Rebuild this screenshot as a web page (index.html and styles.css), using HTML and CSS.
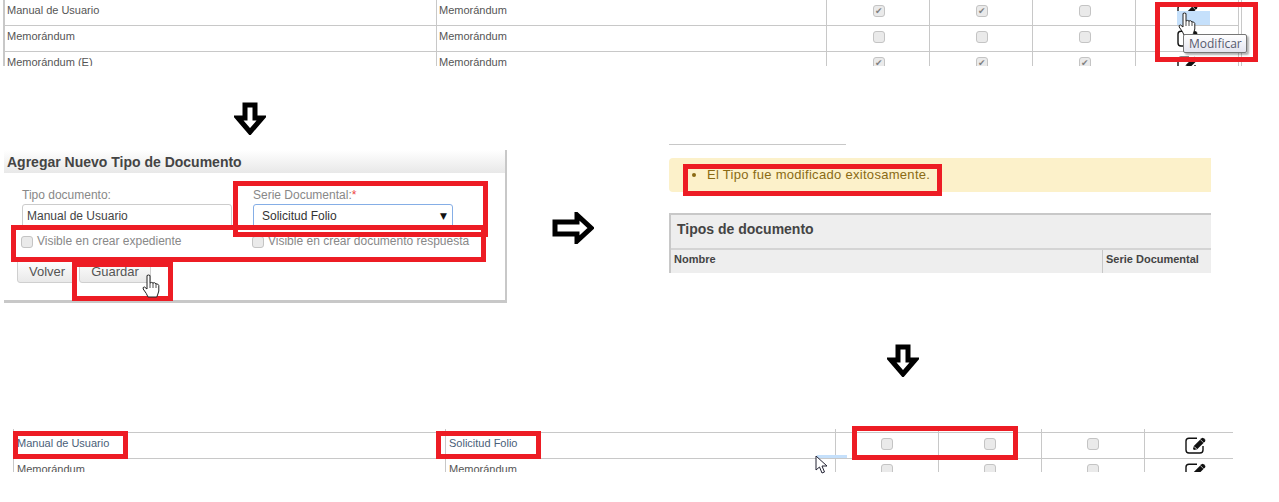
FILE: index.html

```html
<!DOCTYPE html>
<html lang="es">
<head>
  <meta charset="UTF-8">
  <meta name="viewport" content="width=device-width, initial-scale=1.0">
  <title>Tipos de documento</title>
  <link rel="stylesheet" href="styles.css">
</head>
<body>
<svg class="defs" width="0" height="0">
  <symbol id="edit" viewBox="0 0 22 17">
    <path d="M12 1.200H4Q1 1.200 1 4V13Q1 16 4 16H15Q18 16 18 13V9" fill="none" stroke="#111" stroke-width="1.400"/>
    <path d="M8 12L8.800 9L16.600 1.200Q17.600 .4 18.600 1.200L20 2.600Q20.800 3.600 20 4.600L12.200 12.200L9 13Z" fill="#111"/>
    <path d="M9.200 9.600L11.600 12" stroke="#fff" stroke-width=".9"/>
    <path d="M15.400 2.600L18.600 5.800" stroke="#fff" stroke-width=".7"/>
  </symbol>
  <symbol id="hand" viewBox="0 0 18 24">
    <path d="M5 1.500Q6.500 .5 8 1.500V9Q9.500 7.800 11 9Q12.500 8 14 9.800Q16 9.500 16.800 11.500V17Q16 20 14.800 23H6Q5 20 1.200 15Q.5 13 2.500 13L5 15Z" fill="#fff" stroke="#222" stroke-width="1" stroke-linejoin="round"/>
    <path d="M8 9V14M11 9V14M14 10V14" stroke="#222" stroke-width=".8" fill="none"/>
  </symbol>
</svg>

<!-- listado antes del cambio -->
<div class="shot shot-before">
  <div class="grid">
    <div class="row">
      <div class="cell">Manual de Usuario</div>
      <div class="cell">Memorándum</div>
      <div class="cell box"><input type="checkbox" checked disabled></div>
      <div class="cell box"><input type="checkbox" checked disabled></div>
      <div class="cell box"><input type="checkbox" disabled></div>
      <div class="cell box"><svg class="edit"><use href="#edit"/></svg></div>
    </div>
    <div class="row">
      <div class="cell">Memorándum</div>
      <div class="cell">Memorándum</div>
      <div class="cell box"><input type="checkbox" disabled></div>
      <div class="cell box"><input type="checkbox" disabled></div>
      <div class="cell box"><input type="checkbox" disabled></div>
      <div class="cell box"><svg class="edit"><use href="#edit"/></svg></div>
    </div>
    <div class="row">
      <div class="cell">Memorándum (E)</div>
      <div class="cell">Memorándum</div>
      <div class="cell box"><input type="checkbox" checked disabled></div>
      <div class="cell box"><input type="checkbox" checked disabled></div>
      <div class="cell box"><input type="checkbox" checked disabled></div>
      <div class="cell box"><svg class="edit"><use href="#edit"/></svg></div>
    </div>
  </div>
</div>
<div class="selection sel-top"></div>
<svg class="cursor hand-top"><use href="#hand"/></svg>
<div class="tooltip">Modificar</div>
<div class="mark mark-edit"></div>

<svg class="arrow arrow-down-1" viewBox="0 0 32 33"><path d="M11 3H21V16H28L16 30L4 16H11Z"/></svg>

<!-- formulario -->
<div class="shot form-panel">
  <div class="form-title">Agregar Nuevo Tipo de Documento</div>
  <div class="form-body">
    <div class="field">
      <label>Tipo documento:</label>
      <input class="text-input" type="text" value="Manual de Usuario">
    </div>
    <div class="field">
      <label>Serie Documental:<span class="req">*</span></label>
      <div class="select-box">Solicitud Folio <span class="caret">▼</span></div>
    </div>
    <label class="option"><input type="checkbox" disabled> Visible en crear expediente</label>
    <label class="option"><input type="checkbox" disabled> Visible en crear documento respuesta</label>
    <div class="actions">
      <button class="btn">Volver</button>
      <button class="btn">Guardar</button>
    </div>
  </div>
</div>
<div class="mark mark-serie"></div>
<div class="mark mark-visible"></div>
<div class="mark mark-save"></div>
<svg class="cursor hand-save"><use href="#hand"/></svg>

<svg class="arrow arrow-right" viewBox="0 0 42 32"><path d="M3 10H25V3L39 16L25 29V22H3Z"/></svg>

<!-- resultado -->
<div class="shot result">
  <div class="stub-line"></div>
  <div class="alert"><ul><li>El Tipo fue modificado exitosamente.</li></ul></div>
  <div class="list-head">
    <h3>Tipos de documento</h3>
    <div class="list-cols">
      <div>Nombre</div>
      <div>Serie Documental</div>
    </div>
  </div>
</div>
<div class="mark mark-alert"></div>

<svg class="arrow arrow-down-2" viewBox="0 0 32 33"><path d="M11 3H21V16H28L16 30L4 16H11Z"/></svg>

<!-- listado despues del cambio -->
<div class="shot shot-after">
  <div class="grid">
    <div class="row stub">
      <div class="cell"></div><div class="cell"></div><div class="cell"></div>
      <div class="cell"></div><div class="cell"></div><div class="cell"></div>
    </div>
    <div class="row">
      <div class="cell link">Manual de Usuario</div>
      <div class="cell link">Solicitud Folio</div>
      <div class="cell box"><input type="checkbox" disabled></div>
      <div class="cell box"><input type="checkbox" disabled></div>
      <div class="cell box"><input type="checkbox" disabled></div>
      <div class="cell box"><svg class="edit"><use href="#edit"/></svg></div>
    </div>
    <div class="row">
      <div class="cell">Memorándum</div>
      <div class="cell">Memorándum</div>
      <div class="cell box"><input type="checkbox" disabled></div>
      <div class="cell box"><input type="checkbox" disabled></div>
      <div class="cell box"><input type="checkbox" disabled></div>
      <div class="cell box"><svg class="edit"><use href="#edit"/></svg></div>
    </div>
  </div>
</div>
<div class="selection sel-bottom"></div>
<svg class="pointer" viewBox="0 0 13 19"><path d="M1 1V15L4.500 12L7 18L9.500 17L7 11H12Z" fill="#fff" stroke="#223" stroke-width="1"/></svg>
<div class="mark mark-name"></div>
<div class="mark mark-folio"></div>
<div class="mark mark-checks"></div>
</body>
</html>
```

FILE: styles.css

```css
* { box-sizing: border-box; }
body {
  margin: 0;
  width: 1279px;
  height: 502px;
  position: relative;
  overflow: hidden;
  background-color: #ffffff;
  font-family: "Liberation Sans", Arial, sans-serif;
  color: #555555;
}
.defs { position: absolute; }

/* collage pieces sit on a free canvas */
.shot { position: absolute; overflow: hidden; }
.shot-before { left: 3px; top: 0; width: 1239px; height: 66px; border-right: 1px solid #c8c8c8; }
.shot-after { left: 13px; top: 429px; width: 1220px; height: 43px; }
.form-panel { left: 4px; top: 150px; width: 503px; height: 153px; }
.result { left: 669px; top: 144px; width: 542px; height: 129px; }

/* tables */
.grid { border-left: 1px solid #c8c8c8; font-size: 11px; width: 1236px; }
.shot-before .grid { border-left-width: 2px; }
.row {
  display: grid;
  grid-template-columns: 432px 390px 103px 103px 103px 103px;
  height: 26px;
  border-bottom: 1px solid #c8c8c8;
}
.shot-before .row { width: 1234px; }
.row.stub { height: 4px; }
.cell {
  border-right: 1px solid #c8c8c8;
  padding: 4px 3px 0;
  line-height: 13px;
  white-space: nowrap;
}
.shot-before .cell { padding-left: 2px; }
.link { color: #4a6078; }
.box { display: flex; justify-content: center; padding: 5px 0 0; }
.edit { width: 22px; height: 17px; margin-top: -1px; }

input[type="checkbox"] {
  appearance: none;
  width: 12px;
  height: 12px;
  margin: 0;
  background-color: #eaeaea;
  border: 1px solid #c4c4c4;
  border-radius: 3px;
  position: relative;
  flex: none;
}
input[type="checkbox"]:checked::after {
  content: "✔";
  position: absolute;
  left: 1px;
  top: -1px;
  font: 9px/12px "DejaVu Sans", sans-serif;
  color: #808080;
}

/* form */
.form-panel {
  border-right: 2px solid #c8c8c8;
  border-bottom: 3px solid #c8c8c8;
}
.form-title {
  height: 23px;
  padding: 4px 3px 0;
  font-size: 14px;
  font-weight: bold;
  line-height: 16px;
  color: #444444;
  background: linear-gradient(#ffffff, #e8e8e8);
}
.form-body {
  display: grid;
  grid-template-columns: 231px 240px;
  padding: 14px 0 0 18px;
  font-size: 12px;
  color: #888888;
}
.field label { display: block; line-height: 16px; margin-bottom: 1px; }
.field { height: 47px; }
.req { color: #ee4444; }
.text-input {
  display: block;
  width: 210px;
  height: 24px;
  padding: 0 4px;
  border: 1px solid #cccccc;
  border-radius: 3px;
  font: 12px "Liberation Sans", Arial, sans-serif;
  color: #444444;
}
.select-box {
  width: 200px;
  height: 24px;
  padding: 4px 8px;
  border: 1px solid #85aee6;
  border-radius: 3px;
  color: #333333;
  line-height: 15px;
  position: relative;
}
.caret { position: absolute; right: 5px; top: 4px; font: 9px/14px "DejaVu Sans", sans-serif; color: #111111; }
.option { display: flex; gap: 4px; height: 25px; margin-left: -1px; line-height: 14px; }
.option input { margin-top: 2px; }
.actions { grid-column: 1 / 3; display: flex; gap: 2px; margin-left: -5px; }
.btn {
  height: 24px;
  padding: 0 11px;
  border: 1px solid #cfcfcf;
  border-radius: 3px;
  background: linear-gradient(#ffffff, #e9e9e9);
  font: 13px "Liberation Sans", Arial, sans-serif;
  color: #555555;
}

/* result */
.stub-line { width: 177px; height: 1px; background-color: #c8c8c8; }
.alert {
  margin-top: 13px;
  height: 34px;
  background-color: #fcf1ca;
  border-radius: 4px 0 0 4px;
  color: #8a6a14;
  font-size: 13px;
  letter-spacing: 0.3px;
  line-height: 14px;
}
.alert ul { margin: 0; padding: 10px 0 0 38px; }
.list-head {
  margin-top: 21px;
  height: 60px;
  border-top: 2px solid #c8c8c8;
  border-left: 2px solid #c8c8c8;
  background-color: #eeeeee;
  color: #444444;
}
.list-head h3 {
  margin: 0;
  height: 35px;
  padding: 6px 6px 0;
  font-size: 14px;
  line-height: 16px;
  border-bottom: 2px solid #d4d4d4;
}
.list-cols {
  display: grid;
  grid-template-columns: 432px 1fr;
  font-size: 11px;
  font-weight: bold;
  line-height: 18px;
}
.list-cols div { padding-left: 3px; height: 24px; }
.list-cols div:first-child { border-right: 1px solid #c8c8c8; }

/* annotations over the captures */
.mark { position: absolute; border: 5px solid #ed1c24; }
.mark-edit { left: 1155px; top: 2px; width: 103px; height: 60px; }
.mark-serie { left: 233px; top: 181px; width: 255px; height: 56px; }
.mark-visible { left: 11px; top: 225px; width: 475px; height: 37px; }
.mark-save { left: 72px; top: 262px; width: 101px; height: 39px; }
.mark-alert { left: 683px; top: 164px; width: 259px; height: 32px; }
.mark-name { left: 13px; top: 431px; width: 115px; height: 28px; }
.mark-folio { left: 436px; top: 431px; width: 105px; height: 28px; }
.mark-checks { left: 852px; top: 426px; width: 166px; height: 34px; }

.arrow { position: absolute; fill: #ffffff; stroke: #000000; stroke-width: 5; }
.arrow-down-1 { left: 234px; top: 102px; width: 32px; height: 33px; }
.arrow-down-2 { left: 887px; top: 344px; width: 32px; height: 33px; }
.arrow-right { left: 552px; top: 212px; width: 42px; height: 32px; }

.selection { position: absolute; background-color: #c5e0fb; }
.sel-top { left: 1177px; top: 11px; width: 33px; height: 14px; }
.sel-bottom { left: 817px; top: 455px; width: 30px; height: 3px; }

.cursor { position: absolute; width: 18px; height: 24px; }
.hand-top { left: 1178px; top: 12px; }
.hand-save { left: 142px; top: 274px; }
.pointer { position: absolute; left: 815px; top: 455px; width: 13px; height: 19px; }

.tooltip {
  position: absolute;
  left: 1183px;
  top: 34px;
  width: 64px;
  height: 19px;
  padding-left: 5px;
  border: 1px solid #767676;
  border-radius: 2px;
  background: linear-gradient(#ffffff, #e4e5f0);
  box-shadow: 2px 2px 2px rgba(0, 0, 0, 0.3);
  font: 12px/17px "Open Sans", sans-serif;
  color: #575a6e;
}
```
